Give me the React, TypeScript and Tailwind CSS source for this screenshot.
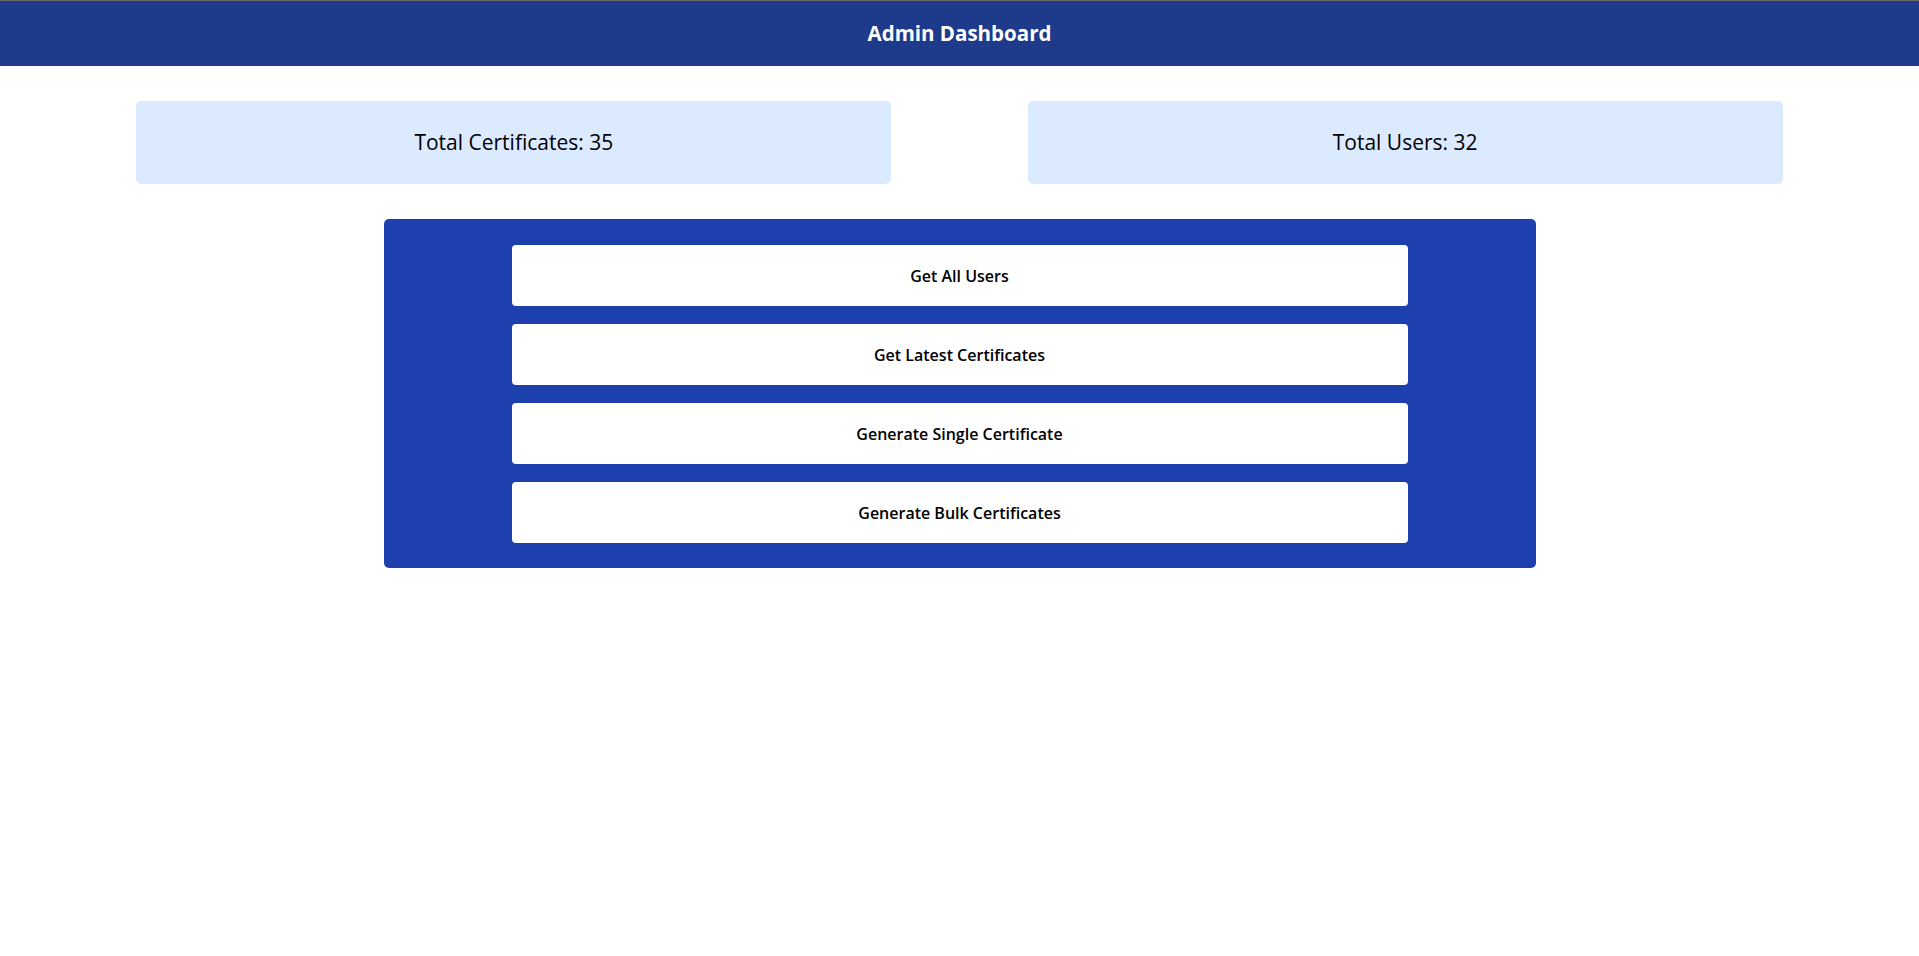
export default function App() {
  const font = { fontFamily: '"Open Sans", "Noto Sans", sans-serif' };
  const buttons = [
    "Get All Users",
    "Get Latest Certificates",
    "Generate Single Certificate",
    "Generate Bulk Certificates",
  ];
  return (
    <div className="min-h-screen bg-white font-['Open_Sans',_'Noto_Sans',_sans-serif]" style={font}>
      <header className="h-[66px] border-t border-[#6b6b6b] bg-[#1e3a8a] flex items-center justify-center">
        <h1 className="text-white text-[20.5px] font-bold">Admin Dashboard</h1>
      </header>
      <div className="flex justify-evenly mt-[35px]">
        <div className="w-[755px] h-[83px] bg-[#dbeafe] rounded-[5px] flex items-center justify-center">
          <span className="text-[21px] text-black">Total Certificates: 35</span>
        </div>
        <div className="w-[755px] h-[83px] bg-[#dbeafe] rounded-[5px] flex items-center justify-center">
          <span className="text-[21px] text-black">Total Users: 32</span>
        </div>
      </div>
      <div className="mt-[35px] mx-auto w-[1152px] bg-[#1e40af] rounded-[5px] px-[128px] pt-[26px] pb-[25px] flex flex-col gap-[18px]">
        {buttons.map((b) => (
          <button
            key={b}
            className="h-[61px] w-full bg-white rounded-[4px] flex items-center justify-center text-[16px] font-semibold text-black"
          >
            {b}
          </button>
        ))}
      </div>
    </div>
  );
}
